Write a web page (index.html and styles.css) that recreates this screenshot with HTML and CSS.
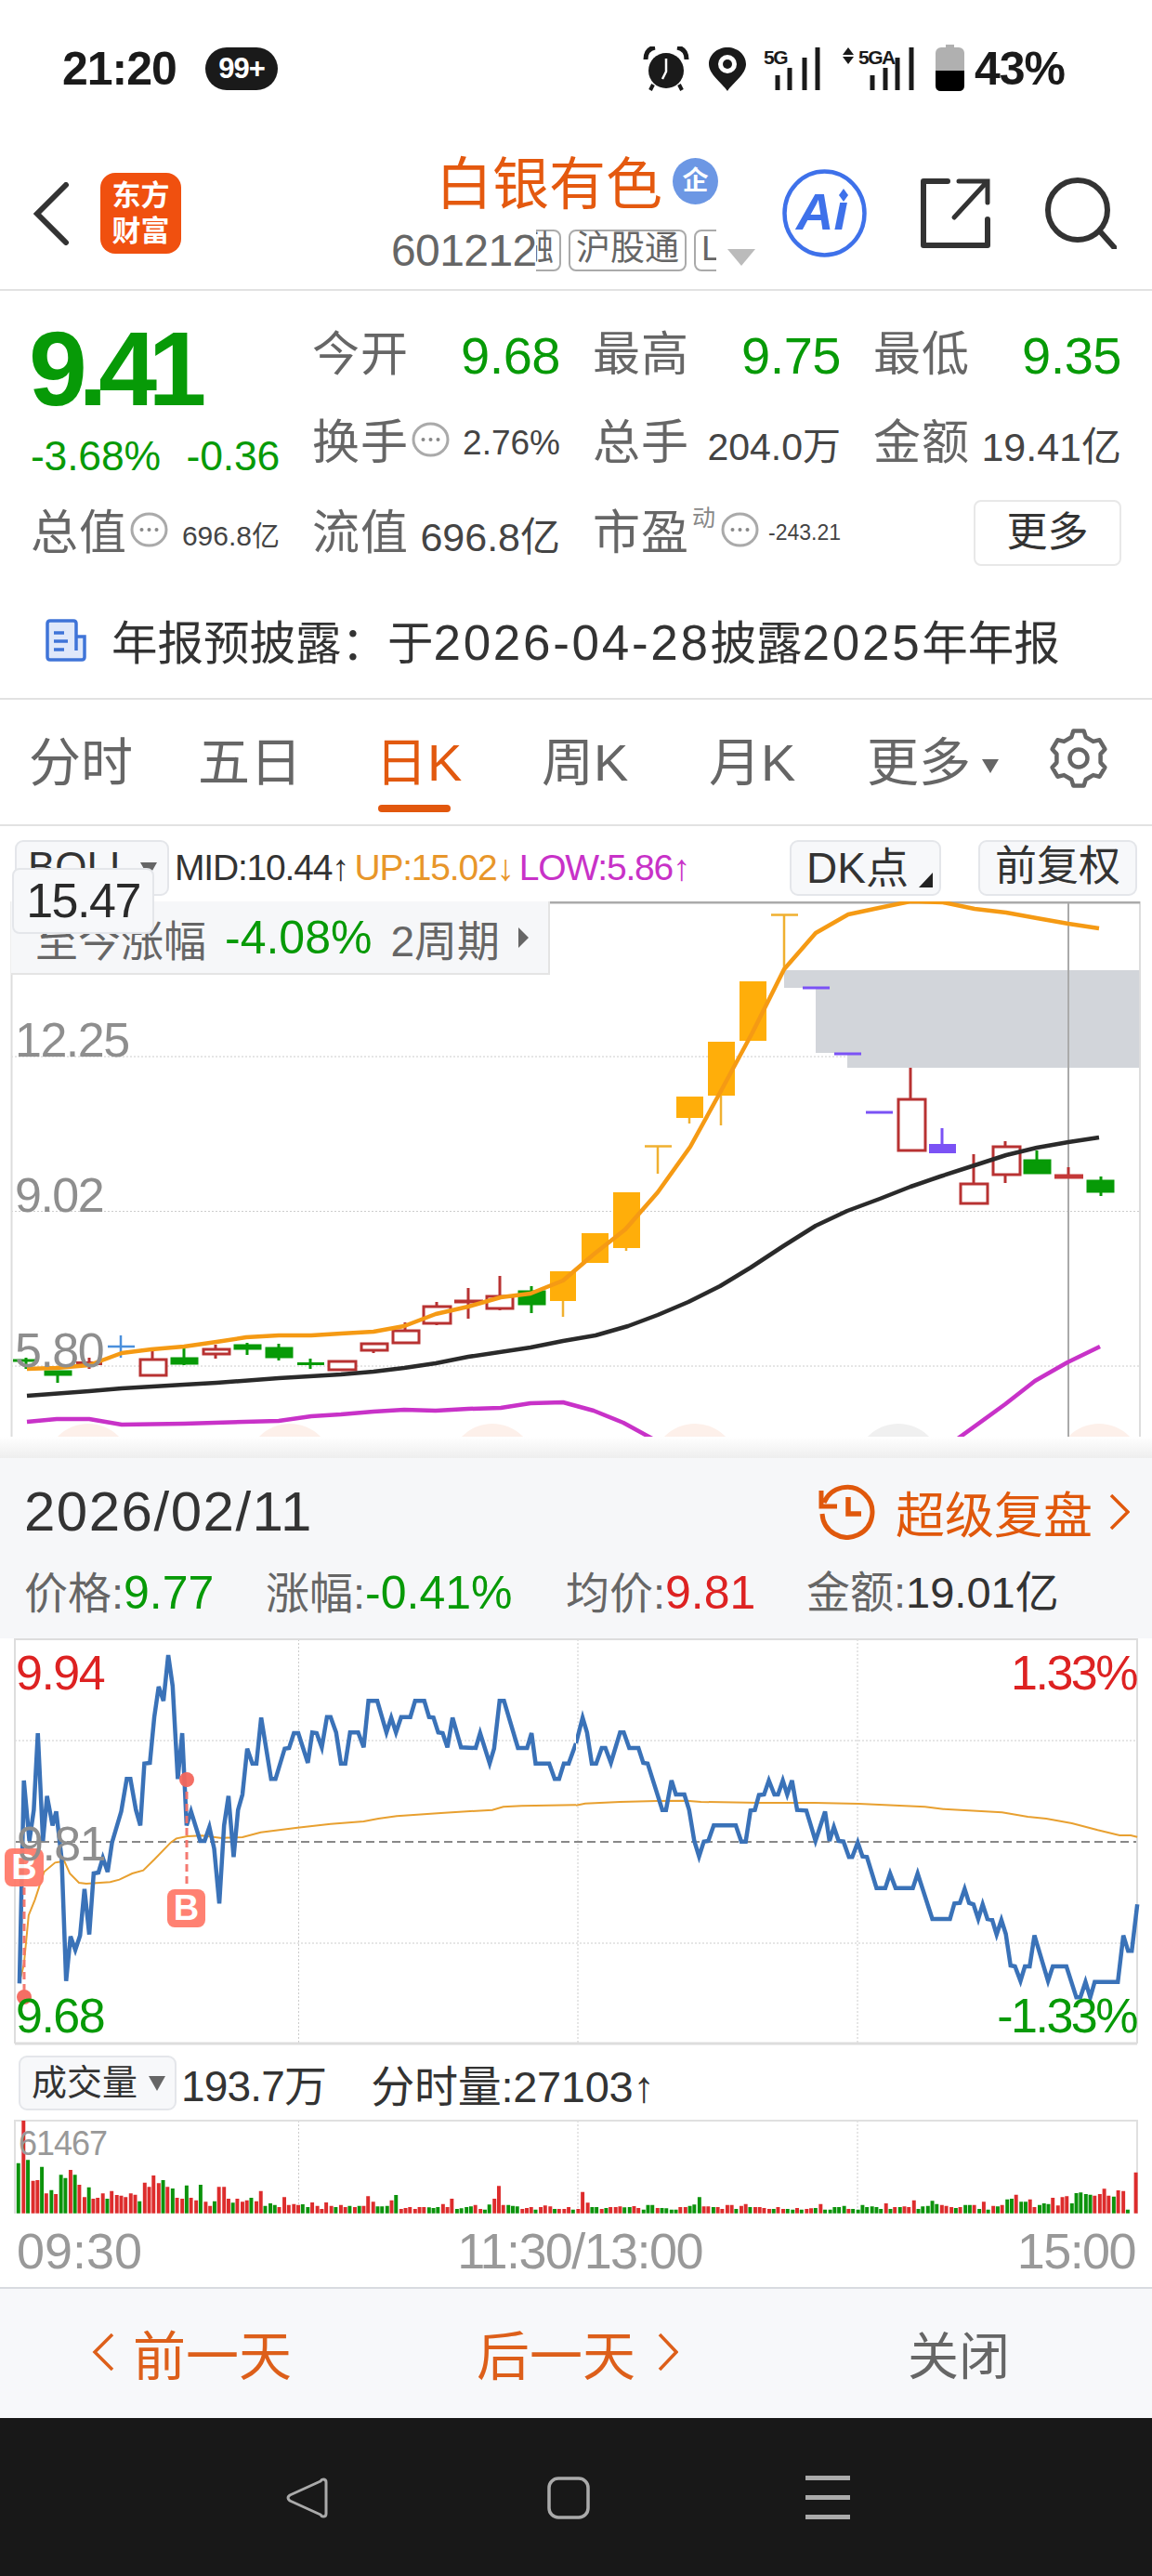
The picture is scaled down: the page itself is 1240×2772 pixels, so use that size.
FILE: index.html
```html
<!DOCTYPE html>
<html lang="zh-CN">
<head>
  <meta charset="UTF-8">
  <title>白银有色</title>
  <link rel="stylesheet" href="styles.css">
</head>
<body>
<svg class="defs" width="0" height="0">
  <symbol id="dots" viewBox="0 0 41 38">
    <ellipse cx="20.5" cy="19" rx="18.5" ry="17" fill="none" stroke="#aaa" stroke-width="3"/>
    <circle cx="12.5" cy="19" r="2" fill="#888"/><circle cx="20.5" cy="19" r="2" fill="#888"/><circle cx="28.5" cy="19" r="2" fill="#888"/>
  </symbol>
</svg>

<!-- 状态栏 -->
<div class="status">
  <span class="clock">21:20</span>
  <span class="badge">99+</span>
  <div class="status-right">
    <svg width="50" height="48" viewBox="0 0 50 48"><circle cx="25" cy="26" r="19" fill="#1a1a1a"/><path d="M3 14C3 6 7 2 13 1M47 14C47 6 43 2 37 1" fill="none" stroke="#1a1a1a" stroke-width="5"/><path d="M25 13V27L21 35" fill="none" stroke="#fff" stroke-width="2.5"/><path d="M11 41L8 47M39 41L42 47" stroke="#1a1a1a" stroke-width="4"/></svg>
    <svg class="st-pin" width="40" height="47" viewBox="0 0 40 47"><path d="M20 47C14 38 0 29 0 18C0 8 9 0 20 0S40 8 40 18C40 29 26 38 20 47Z" fill="#1a1a1a"/><circle cx="20" cy="18" r="10" fill="#fff"/><circle cx="20" cy="18" r="5" fill="#1a1a1a"/></svg>
    <svg class="st-sig" width="64" height="48" viewBox="0 0 64 48"><text class="st-net" x="0" y="19">5G</text><path d="M15 47V31M28 47V23M44 47V12M58 47V1" stroke="#1a1a1a" stroke-width="5" fill="none"/></svg>
    <svg class="st-sig2" width="80" height="48" viewBox="0 0 80 48"><path d="M6 1L12 9H0ZM6 19L12 11H0Z" fill="#1a1a1a"/><text class="st-net" x="17" y="19">5GA</text><path d="M32 47V31M46 47V23M59 47V12M74 47V1" stroke="#1a1a1a" stroke-width="5" fill="none"/></svg>
    <svg class="st-bat" width="31" height="50" viewBox="0 0 31 50"><rect x="11" y="0" width="9" height="5" fill="#b0b0b0"/><rect x="0" y="3" width="31" height="47" rx="6" fill="#b0b0b0"/><path d="M0 28H31V44Q31 50 25 50H6Q0 50 0 44Z" fill="#000"/></svg>
    <span class="percent">43%</span>
  </div>
</div>

<!-- 标题栏 -->
<div class="head">
  <svg class="back" width="39" height="68" viewBox="0 0 39 68"><path d="M35 3L4 34L35 65" fill="none" stroke="#333" stroke-width="6" stroke-linecap="round"/></svg>
  <div class="logo"><span>东方</span><span>财富</span></div>
  <div class="title">
    <div class="name-row"><span class="name">白银有色</span><span class="qi">企</span></div>
    <div class="code-row">
      <span class="code">601212</span>
      <div class="tags"><span class="tag tag-first">融</span><span class="tag">沪股通</span><span class="tag">L1</span></div>
      <span class="tri-down"></span>
    </div>
  </div>
  <svg class="ai" width="91" height="95" viewBox="0 0 91 95"><ellipse cx="45.500" cy="47.500" rx="43" ry="45" fill="#fff" stroke="#3e71ea" stroke-width="4.500"/><text class="ai-text" x="15" y="65">Aı</text><path d="M66 21L71 28L66 35L61 28Z" fill="#3e71ea"/></svg>
  <svg class="share" width="75" height="75" viewBox="0 0 75 75"><path d="M29 3H3V72H72V44" fill="none" stroke="#333" stroke-width="6" stroke-linejoin="round" stroke-linecap="round"/><path d="M36 42L71 4M41 3H72V26" fill="none" stroke="#333" stroke-width="5" stroke-linecap="round"/></svg>
  <svg class="search" width="77" height="77" viewBox="0 0 77 77"><ellipse cx="35" cy="35" rx="32" ry="32" fill="none" stroke="#333" stroke-width="6"/><path d="M59 58L75 76" stroke="#333" stroke-width="6" stroke-linecap="round"/></svg>
</div>

<!-- 行情 -->
<div class="quote">
  <div class="cur">
    <div class="cur-price">9.41</div>
    <div class="cur-change"><span>-3.68%</span><span>-0.36</span></div>
  </div>
  <div class="cell cell-top"><span class="lab">今开</span><span class="num">9.68</span></div>
  <div class="cell cell-top"><span class="lab">最高</span><span class="num">9.75</span></div>
  <div class="cell cell-top"><span class="lab">最低</span><span class="num">9.35</span></div>
  <div class="cell"><span class="lab">换手</span><svg class="dots" width="41" height="38"><use href="#dots"/></svg><span class="val val-m">2.76%</span></div>
  <div class="cell"><span class="lab">总手</span><span class="val val-w">204.0万</span></div>
  <div class="cell"><span class="lab">金额</span><span class="val val-l">19.41亿</span></div>
  <div class="cell"><span class="lab">总值</span><svg class="dots" width="41" height="38"><use href="#dots"/></svg><span class="val val-s">696.8亿</span></div>
  <div class="cell"><span class="lab">流值</span><span class="val val-l">696.8亿</span></div>
  <div class="cell"><span class="lab">市盈</span><sup class="dong">动</sup><svg class="dots" width="41" height="38"><use href="#dots"/></svg><span class="val val-xs">-243.21</span></div>
  <div class="cell"><span class="more-btn">更多</span></div>
</div>

<div class="notice">
  <svg width="44" height="46" viewBox="0 0 44 46"><path d="M33 34V5Q33 2 30 2H5Q2 2 2 5V41Q2 44 5 44H39Q42 44 42 41V19H33" fill="#dfe8fa" stroke="#3f74d8" stroke-width="3.500"/><path d="M9 15H20M9 24H24M9 33H20" stroke="#3f74d8" stroke-width="3.500"/></svg>
  <span>年报预披露：于<span class="nd">2026-04-28</span>披露<span class="nd">2025</span>年年报</span>
</div>

<!-- 周期切换 -->
<div class="tabs">
  <span class="tab">分时</span>
  <span class="tab">五日</span>
  <span class="tab active">日K</span>
  <span class="tab">周K</span>
  <span class="tab">月K</span>
  <span class="tab">更多<i class="tab-tri"></i></span>
  <svg class="gear" width="66" height="66" viewBox="0 0 66 66"><path d="M25.200 10.300L27.300 3.600H38.700L40.800 10.300L48.700 14.900L55.600 13.300L61.400 23.200L56.600 28.400V37.600L61.400 42.800L55.600 52.700L48.700 51.100L40.800 55.700L38.700 62.400H27.300L25.200 55.700L17.300 51.100L10.400 52.700L4.600 42.800L9.400 37.600V28.400L4.600 23.200L10.400 13.300L17.300 14.900Z" fill="none" stroke="#666" stroke-width="4.500" stroke-linejoin="round"/><circle cx="33" cy="33" r="9.500" fill="none" stroke="#666" stroke-width="4.500"/></svg>
</div>

<!-- K线 -->
<div class="kline">
  <div class="k-tools">
    <span class="btn btn-boll">BOLL<i class="btn-tri"></i></span>
    <span class="k-val k-mid">MID:10.44↑</span>
    <span class="k-val k-up">UP:15.02↓</span>
    <span class="k-val k-low">LOW:5.86↑</span>
    <span class="btn btn-dk">DK点<i class="corner"></i></span>
    <span class="btn btn-fq">前复权</span>
  </div>
  <svg class="k-chart" width="1240" height="576" viewBox="0 969 1240 576">
    <g class="k-marks"><circle cx="95" cy="1577" r="46" fill="#fdf0ea"/><circle cx="312" cy="1577" r="46" fill="#fdf0ea"/><circle cx="530" cy="1577" r="46" fill="#fdf0ea"/><circle cx="748" cy="1577" r="46" fill="#fdf0ea"/><circle cx="967" cy="1577" r="46" fill="#f0f0f0"/><circle cx="1183" cy="1577" r="46" fill="#fdf0ea"/></g>
    <path class="grid" d="M12 1136H1227M12 1302.500H1227M12 1469H1227"/>
    <path d="M844 1043H1227V1148H912V1132H878V1062H844Z" fill="#d2d5da"/>
    <path d="M1150 969V1545" stroke="#aaa" stroke-width="2"/>
    <path d="M12.500 969V1545M1227 969V1545" stroke="#ddd" stroke-width="2"/>
    <path d="M12 970H1227" stroke="#aaa" stroke-width="3"/>

    <!-- 绿 -->
    <g fill="#079a07" stroke="#079a07" stroke-width="3">
      <path d="M14 1463H41M28 1460V1472M62 1479V1487M198 1450V1468M266 1444V1457M300 1445V1463M334 1461V1472M320 1466.500H349M572 1383V1412M1116 1237V1262M1185 1265V1286" fill="none"/>
      <rect x="49" y="1475" width="27" height="3"/><rect x="185" y="1461" width="27" height="5"/><rect x="253" y="1447" width="27" height="3"/><rect x="287" y="1450" width="27" height="9"/><rect x="559" y="1389" width="27" height="13"/><rect x="1103" y="1248" width="27" height="13"/><rect x="1171" y="1270" width="27" height="11"/>
    </g>
    <!-- 蓝十字 -->
    <path d="M116 1448H145M130 1436V1460" stroke="#4a8fdc" stroke-width="2.500" fill="none"/>
    <!-- 红 -->
    <g fill="#fff" stroke="#b83232" stroke-width="3">
      <path d="M96 1460V1472M164 1453V1461M232 1446V1450M232 1455V1461M402 1452V1455M436 1422V1430M470 1400V1404M470 1423V1425M504 1385V1418M538 1372V1393M538 1407V1409M980 1148V1181M1048 1241V1272M1082 1227V1232M1082 1263V1272M1150 1255V1265" fill="none"/>
      <path d="M82 1466H110" stroke-width="4"/><path d="M489 1399.500H520" stroke-width="4"/><path d="M1135 1265H1166" stroke-width="5" stroke="#c43838"/>
      <rect x="151" y="1462" width="28" height="17"/><rect x="219" y="1451" width="28" height="5"/><rect x="354" y="1464" width="29" height="9"/><rect x="389" y="1445" width="28" height="7"/><rect x="423" y="1431" width="28" height="13"/><rect x="456" y="1405" width="29" height="18"/><rect x="524" y="1394" width="28" height="13"/><rect x="967" y="1182" width="29" height="55"/><rect x="1034" y="1273" width="29" height="21"/><rect x="1069" y="1233" width="29" height="30"/>
    </g>
    <!-- 橙 -->
    <g fill="#ffae0a" stroke="none">
      <rect x="592" y="1367" width="28" height="32"/><rect x="626" y="1326" width="29" height="32"/><rect x="660" y="1282" width="29" height="60"/><rect x="728" y="1179" width="29" height="23"/><rect x="762" y="1120" width="29" height="58"/><rect x="796" y="1055" width="29" height="64"/>
    </g>
    <path d="M606 1399V1416M674 1342V1345M694 1232.500H723M708 1232V1262M742 1202V1208M776 1178V1210M830 983.500H859M844 983V1043" stroke="#f0b030" stroke-width="2.500" fill="none"/>
    <!-- 紫 -->
    <path d="M864 1062H893M898 1133H927M932 1196H961" stroke="#7b52f5" stroke-width="3" fill="none"/>
    <path d="M1014 1213V1230" stroke="#7b52f5" stroke-width="3"/><rect x="1000" y="1230" width="29" height="10" fill="#7b52f5"/>

    <polyline class="ln ln-low" points="29,1529 61,1526 96,1526 131,1532 198,1531 300,1528 335,1523 367,1521 402,1518 435,1516 469,1517 504,1515 539,1514 571,1509 606,1508 639,1517 671,1530 702,1547"/>
    <polyline class="ln ln-low" points="1031,1547 1082,1510 1114,1485 1149,1465 1184,1448"/>
    <polyline class="ln ln-mid" points="29,1501 96,1496 131,1493 198,1489 233,1487 300,1482 367,1478 402,1475 435,1471 469,1466 504,1459 571,1449 606,1442 641,1436 676,1426 708,1414 741,1400 775,1383 808,1363 843,1340 878,1318 912,1302 947,1289 980,1276 1012,1265 1049,1253 1083,1242 1116,1234 1150,1228 1183,1223"/>
    <polyline class="ln ln-up" points="29,1472 61,1471 96,1468 131,1455 163,1451 198,1448 233,1443 265,1438 300,1436 335,1436 367,1434 402,1432 435,1426 469,1413 504,1405 539,1395 571,1391 606,1377 640,1348 673,1322 708,1282 743,1233 776,1173 810,1110 844,1042 878,1003 913,983 946,976 980,969 1015,970 1049,977 1083,981 1116,987 1150,993 1183,998"/>

    <text class="axis" x="16" y="1136">12.25</text>
    <text class="axis" x="16" y="1303">9.02</text>
    <text class="axis" x="16" y="1470">5.80</text>
  </svg>
  <div class="range"><span class="range-lab">至今涨幅</span><span class="range-val">-4.08%</span><span class="range-lab">2周期</span><i class="range-tri"></i></div>
  <div class="pop-price">15.47</div>
</div>
<div class="shade"></div>

<!-- 复盘面板 -->
<div class="panel">
  <div class="panel-top">
    <span class="p-date">2026/02/11</span>
    <span class="p-link">
      <svg width="63" height="61" viewBox="0 0 63 61"><path d="M3 8V25H20M6 21A27 27 0 1 1 4 33" fill="none" stroke="#e0580c" stroke-width="5"/><path d="M32 15V33H46" fill="none" stroke="#e0580c" stroke-width="5.500"/></svg>
      <span>超级复盘</span>
      <svg class="p-chev" width="22" height="38" viewBox="0 0 22 38"><path d="M2 1L20 19L2 37" fill="none" stroke="#e0580c" stroke-width="3.500"/></svg>
    </span>
  </div>
  <div class="panel-row">
    <span class="p-lab">价格:<b class="green">9.77</b></span>
    <span class="p-lab">涨幅:<b class="green">-0.41%</b></span>
    <span class="p-lab">均价:<b class="red">9.81</b></span>
    <span class="p-lab">金额:<b class="dark">19.01亿</b></span>
  </div>
</div>

<!-- 分时图 -->
<svg class="t-chart" width="1240" height="438" viewBox="0 1762 1240 438">
  <path class="grid" d="M16 1872H1224M16 2090H1224M321.500 1763V2197M622 1763V2197M923 1763V2197"/>
  <path d="M16 1981H1224" stroke="#888" stroke-width="2" stroke-dasharray="9 5" fill="none"/>
  <path d="M16 2198V1763H1224V2198" fill="none" stroke="#ddd" stroke-width="2"/>
  <path d="M16 2198H1224" stroke="#ddd" stroke-width="3"/>
  <svg x="0" y="1760" width="620" height="450" viewBox="0 0 1568 1350" preserveAspectRatio="none">
    <polyline class="t-avg" points="53,1115 65,1060 78,900 95,850 120,760 150,730 175,725 190,765 215,795 235,798 300,793 325,785 360,765 390,755 420,720 465,665 480,652 510,645 550,643 600,650 660,648 710,632 760,625 810,617 900,605 990,597 1030,588 1080,580 1200,570 1340,560 1370,550 1420,547 1568,544"/>
    <polyline class="t-price" points="53,1120 65,465 80,660 92,560 103,312 117,660 128,515 143,610 153,565 168,720 180,1112 192,968 205,1012 218,965 230,815 243,962 255,765 268,762 280,715 293,760 305,665 330,565 345,460 355,460 370,560 382,610 393,410 408,408 420,260 432,162 445,208 458,60 470,160 484,460 496,312 508,610 520,565 545,660 557,660 570,615 583,685 597,862 610,610 622,515 636,712 648,560 660,510 673,362 687,410 698,410 711,262 738,460 750,460 775,362 787,360 800,312 812,312 838,408 850,310 862,312 876,358 890,260 900,260 915,310 928,410 940,410 953,310 975,310 990,358 1003,208 1027,208 1052,310 1065,262 1078,310 1092,260 1117,260 1130,208 1155,208 1168,260 1180,262 1193,310 1205,312 1218,358 1232,262 1255,358 1295,360 1307,312 1333,410 1345,362 1360,208 1372,208 1410,360 1435,360 1447,312 1458,410 1495,410 1510,460 1522,460 1535,410 1548,410 1568,345"/>
  </svg>
  <svg x="620" y="1760" width="620" height="450" viewBox="0 0 1568 1350" preserveAspectRatio="none">
    <polyline class="t-avg" points="0,545 25,539 120,534 220,531 300,530 340,534 500,537 650,537 770,540 950,550 1000,557 1160,568 1230,582 1280,588 1350,603 1420,625 1480,642 1510,642 1528,647"/>
    <polyline class="t-price" points="0,345 18,262 30,310 43,410 55,410 70,360 80,360 95,408 120,310 130,310 145,360 170,360 183,408 195,410 235,560 245,560 260,465 272,510 295,510 308,560 322,660 335,710 348,662 360,660 375,610 435,610 450,662 462,662 475,562 487,560 498,512 512,510 525,465 540,510 550,510 563,465 575,510 588,465 602,560 627,562 652,660 678,565 690,660 702,615 715,660 728,662 743,712 752,712 767,665 780,710 792,712 818,812 842,812 855,765 870,812 917,812 930,765 970,912 1018,912 1030,862 1045,860 1058,815 1070,860 1082,865 1095,912 1107,865 1120,912 1133,915 1145,962 1158,915 1170,960 1183,1062 1195,1065 1210,1112 1222,1065 1235,1065 1248,965 1285,1112 1298,1065 1335,1065 1362,1165 1373,1165 1387,1115 1400,1165 1412,1115 1475,1115 1490,965 1503,1015 1513,1015 1528,865"/>
  </svg>
  <!-- 买点 -->
  <g opacity=".95">
    <path d="M201 1914V2030" stroke="#f4736a" stroke-width="3" stroke-dasharray="8 5" fill="none"/>
    <circle cx="201" cy="1914" r="8" fill="#f4675c"/>
    <rect x="180" y="2032" width="41" height="41" rx="8" fill="#ff7b6b"/>
    <text class="b-mark" x="200.500" y="2065">B</text>
    <path d="M26 2030V2148" stroke="#f4736a" stroke-width="3" stroke-dasharray="8 5" fill="none"/>
    <circle cx="26" cy="2148" r="8" fill="#f4675c"/>
    <rect x="5" y="1988" width="42" height="41" rx="8" fill="#ff7b6b"/>
    <text class="b-mark" x="26" y="2021">B</text>
  </g>
  <text class="axis red-t" x="17" y="1817">9.94</text>
  <text class="axis" x="18" y="2001">9.81</text>
  <text class="axis green-t" x="17" y="2186">9.68</text>
  <text class="axis tight red-t end" x="1223" y="1817">1.33%</text>
  <text class="axis tight green-t end" x="1223" y="2186">-1.33%</text>
</svg>

<!-- 成交量 -->
<div class="vol-tools">
  <span class="btn btn-vol">成交量<i class="btn-tri"></i></span>
  <span class="vol-text">193.7万</span>
  <span class="vol-text vol-cur">分时量:27103↑</span>
</div>
<svg class="v-chart" width="1240" height="102" viewBox="0 2280 1240 102">
  <path class="grid" d="M321.500 2281V2381M622 2281V2381M923 2281V2381"/>
  <path d="M16 2381V2281H1224V2381" fill="none" stroke="#e0e0e0" stroke-width="2"/>
  <svg x="0" y="2280" width="1240" height="101" viewBox="0 270 1568 303" preserveAspectRatio="none">
    <path d="M32 572V273M45 572V467M51 572V465M63 572V508M76 572V510M96 572V432M108 572V480M115 572V520M127 572V525M133 572V522M140 572V508M152 572V500M159 572V513M165 572V515M171 572V520M178 572V508M184 572V512M197 572V473M203 572V487M209 572V450M216 572V475M228 572V487M241 572V522M248 572V525M260 572V522M267 572V530M280 572V535M286 572V548M298 572V487M305 572V487M311 572V525M323 572V525M330 572V535M336 572V530M349 572V533M355 572V500M380 572V552M387 572V520M393 572V545M400 572V542M406 572V545M425 572V537M432 572V548M438 572V558M444 572V537M451 572V548M464 572V545M470 572V552M483 572V552M495 572V548M501 572V517M508 572V535M533 572V530M546 572V558M552 572V555M558 572V552M565 572V558M571 572V552M577 572V552M603 572V542M609 572V552M615 572V525M647 572V545M654 572V558M673 572V525M679 572V484M685 572V545M711 572V558M717 572V555M723 572V552M736 572V552M742 572V547M749 572V550M761 572V558M768 572V558M774 572V552M787 572V558M793 572V503M800 572V538M819 572V558M831 572V552M838 572V552M844 572V550M863 572V549M869 572V555M895 572V555M926 572V552M933 572V552M958 572V550M964 572V550M977 572V552M983 572V558M990 572V545M996 572V545M1009 572V548M1015 572V542M1028 572V552M1034 572V552M1040 572V555M1047 572V558M1059 572V552M1066 572V558M1085 572V555M1098 572V558M1104 572V556M1117 572V542M1155 572V558M1206 572V540M1218 572V552M1231 572V550M1237 572V552M1244 572V530M1282 572V545M1288 572V548M1295 572V552M1307 572V552M1326 572V545M1339 572V535M1352 572V548M1364 572V545M1383 572V512M1402 572V527M1408 572V552M1433 572V522M1440 572V547M1446 572V520M1452 572V517M1490 572V515M1497 572V510M1503 572V493M1509 572V515M1522 572V498M1529 572V500M1546 572V440" class="bar bar-red"/>
    <path d="M25 572V410M38 572V400M57 572V422M70 572V497M83 572V448M89 572V458M102 572V448M121 572V488M146 572V525M190 572V533M222 572V465M235 572V492M254 572V482M273 572V480M292 572V533M317 572V538M342 572V522M361 572V548M368 572V540M374 572V545M412 572V543M419 572V552M457 572V552M476 572V548M489 572V548M514 572V550M520 572V550M527 572V548M539 572V513M584 572V553M590 572V555M596 572V552M622 572V558M628 572V556M635 572V552M641 572V550M660 572V560M666 572V544M692 572V545M698 572V548M704 572V550M729 572V560M755 572V558M780 572V560M806 572V552M812 572V552M825 572V555M850 572V553M857 572V552M876 572V560M882 572V545M888 572V545M901 572V555M907 572V556M914 572V560M920 572V560M939 572V548M945 572V544M952 572V520M971 572V552M1002 572V558M1021 572V552M1053 572V558M1072 572V558M1079 572V560M1091 572V560M1110 572V555M1123 572V560M1130 572V560M1136 572V552M1142 572V552M1149 572V548M1161 572V558M1168 572V560M1174 572V545M1180 572V552M1187 572V550M1193 572V552M1199 572V558M1212 572V558M1225 572V552M1250 572V558M1256 572V550M1263 572V548M1269 572V532M1275 572V542M1301 572V555M1314 572V545M1320 572V545M1333 572V558M1345 572V560M1358 572V550M1371 572V527M1377 572V525M1390 572V535M1396 572V535M1415 572V545M1421 572V540M1427 572V542M1459 572V540M1465 572V507M1471 572V505M1478 572V510M1484 572V512M1516 572V518M1535 572V560" class="bar bar-green"/>
  </svg>
  <text class="v-max" x="20" y="2318">61467</text>
</svg>
<div class="times"><span>09:30</span><span>11:30/13:00</span><span>15:00</span></div>

<!-- 底部操作 -->
<div class="day-bar">
  <svg width="24" height="40" viewBox="0 0 24 40"><path d="M22 1L3 20L22 39" fill="none" stroke="#dd5f1a" stroke-width="3.500"/></svg>
  <span class="day-link day-prev">前一天</span>
  <span class="day-link day-next">后一天</span>
  <svg class="day-chev" width="22" height="40" viewBox="0 0 22 40"><path d="M2 1L20 20L2 39" fill="none" stroke="#dd5f1a" stroke-width="3.500"/></svg>
  <span class="day-close">关闭</span>
</div>

<!-- 系统导航 -->
<div class="nav">
  <svg width="45" height="46" viewBox="0 0 45 46"><path d="M40 3Q43 3 43 6V40Q43 43 40 43Q38 43 37 41L4 26Q0 23 4 20L37 5Q38 3 40 3Z" fill="none" stroke="#aaa" stroke-width="3" stroke-linejoin="round"/></svg>
  <svg class="nav-home" width="46" height="46" viewBox="0 0 46 46"><rect x="2" y="2" width="42" height="42" rx="10" fill="none" stroke="#aaa" stroke-width="3.500"/></svg>
  <svg class="nav-menu" width="48" height="47" viewBox="0 0 48 47"><path d="M0 2.500H48M0 23.500H48M0 44.500H48" stroke="#aaa" stroke-width="5"/></svg>
</div>
</body>
</html>
```

FILE: styles.css
```css
* {
  padding: 0;
  margin: 0;
  box-sizing: border-box;
}

body {
  width: 1240px;
  height: 2772px;
  overflow: hidden;
  background: #fff;
  font-family: "Liberation Sans", "Noto Sans CJK SC", sans-serif;
  color: #333;
}

i {
  font-style: normal;
}

svg {
  display: block;
  flex: none;
}

.defs {
  position: absolute;
}

/* 状态栏 */
.status {
  height: 148px;
  padding: 0 0 0 67px;
  display: flex;
  align-items: center;
}

.clock {
  width: 129px;
  font-size: 50px;
  font-weight: bold;
  letter-spacing: -1px;
  color: #1a1a1a;
}

.badge {
  width: 78px;
  height: 46px;
  margin-left: 25px;
  border-radius: 23px;
  background: #1a1a1a;
  color: #fff;
  font-size: 31px;
  font-weight: bold;
  line-height: 46px;
  text-align: center;
  letter-spacing: -1px;
}

.status-right {
  margin-left: 393px;
  display: flex;
  align-items: center;
}

.st-pin {
  margin-left: 21px;
}

.st-sig {
  margin-left: 19px;
}

.st-sig2 {
  margin-left: 21px;
}

.st-bat {
  margin-left: 20px;
  margin-top: -3px;
}

.st-net {
  font-size: 21px;
  font-weight: bold;
  letter-spacing: -1.5px;
  fill: #1a1a1a;
}

.percent {
  margin-left: 11px;
  font-size: 50px;
  font-weight: bold;
  letter-spacing: -1px;
  color: #1a1a1a;
}

/* 标题栏 */
.head {
  height: 165px;
  padding-left: 36px;
  display: flex;
  align-items: center;
  border-bottom: 2px solid #e2e2e2;
}

.back {
  margin-right: 33px;
}

.logo {
  width: 87px;
  height: 87px;
  border-radius: 16px;
  background: #f0500f;
  color: #fff;
  font-size: 31px;
  font-weight: bold;
  line-height: 38px;
  display: flex;
  flex-direction: column;
  align-items: center;
  justify-content: center;
}

.title {
  width: 393px;
  margin-left: 226px;
}

.name-row {
  padding-left: 48px;
  display: flex;
  align-items: center;
  height: 76px;
  margin-top: -6px;
}

.name {
  font-size: 61px;
  line-height: 76px;
  color: #e4590f;
}

.qi {
  width: 49px;
  height: 50px;
  margin-left: 11px;
  margin-top: -8px;
  border-radius: 50%;
  background: #6c97e4;
  color: #fff;
  font-size: 28px;
  font-weight: bold;
  line-height: 50px;
  text-align: center;
}

.code-row {
  margin-top: 10px;
  display: flex;
  align-items: center;
  height: 46px;
}

.code {
  width: 156px;
  font-size: 48px;
  letter-spacing: -.6px;
  color: #666;
}

.tags {
  width: 194px;
  display: flex;
  overflow: hidden;
}

.tag {
  flex: none;
  height: 45px;
  padding: 0 6px;
  margin-right: 8px;
  border: 2px solid #aaa;
  border-radius: 8px;
  font-size: 37px;
  line-height: 38px;
  color: #666;
}

.tag-first {
  margin-left: -26px;
}

.tri-down {
  width: 0;
  height: 0;
  margin: 14px 0 0 12px;
  border-left: 15px solid transparent;
  border-right: 15px solid transparent;
  border-top: 18px solid #bbb;
}

.ai {
  margin-left: 28px;
}

.ai-text {
  font-size: 56px;
  font-weight: bold;
  font-style: italic;
  fill: #3e71ea;
}

.share {
  margin-left: 58px;
}

.search {
  margin-left: 59px;
}

/* 行情 */
.quote {
  padding-left: 33px;
  padding-top: 18px;
  display: grid;
  grid-template-columns: 268px 267px 267px 267px;
  grid-template-rows: 97px 97px 97px;
  column-gap: 35px;
}

.cur {
  grid-row: span 2;
  color: #079a07;
}

.cur-price {
  margin-top: 6px;
  margin-left: -2px;
  font-size: 113px;
  font-weight: bold;
  line-height: 120px;
  letter-spacing: -9.500px;
}

.cur-change {
  margin-top: 9px;
  display: flex;
  justify-content: space-between;
  font-size: 44.500px;
  line-height: 50px;
  letter-spacing: -.2px;
}

.cell {
  display: flex;
  align-items: center;
}

.cell-top {
  padding-top: 5px;
}

.lab {
  font-size: 51px;
  color: #666;
  letter-spacing: 1px;
  line-height: 60px;
}

.num {
  margin-left: auto;
  font-size: 56px;
  letter-spacing: -.5px;
  color: #079a07;
}

.val {
  margin-left: auto;
  color: #444;
  white-space: nowrap;
}

.val-l {
  font-size: 43px;
}

.val-m {
  font-size: 37px;
}

.val-w {
  font-size: 41px;
}

.val-s {
  font-size: 30px;
}

.val-xs {
  font-size: 23px;
}

.dots {
  margin: -8px 0 0 3px;
}

.dong {
  width: 28px;
  margin: -34px 0 0 3px;
  font-size: 25px;
  line-height: 28px;
  color: #888;
}

.more-btn {
  width: 159px;
  height: 71px;
  margin-left: auto;
  border: 2px solid #e8e8e8;
  border-radius: 8px;
  font-size: 44px;
  line-height: 66px;
  text-align: center;
  color: #333;
}

.notice {
  height: 131px;
  padding: 4px 0 0 49px;
  display: flex;
  align-items: center;
  border-bottom: 2px solid #e2e2e2;
  font-size: 49.500px;
  color: #333;
}

.notice svg {
  margin-right: 27px;
}

.nd {
  font-size: 53px;
  letter-spacing: 2.700px;
}

/* 周期切换 */
.tabs {
  height: 136px;
  padding-left: 31px;
  display: grid;
  grid-template-columns: 182px 194px 176px 180px 170px 195px auto;
  align-items: center;
  border-bottom: 2px solid #e2e2e2;
}

.tab {
  position: relative;
  margin-top: -10px;
  font-size: 56px;
  color: #666;
  white-space: nowrap;
}

.tab.active {
  margin-left: -3px;
  color: #e2590f;
}

.tab.active::after {
  content: "";
  position: absolute;
  left: 3px;
  bottom: -18px;
  width: 78px;
  height: 8px;
  border-radius: 4px;
  background: #e2570d;
}

.tab-tri {
  display: inline-block;
  margin-left: 12px;
  vertical-align: middle;
  border-left: 9px solid transparent;
  border-right: 9px solid transparent;
  border-top: 15px solid #666;
}

.gear {
  margin-top: -8px;
}

/* K线 */
.kline {
  position: relative;
}

.k-tools {
  height: 81px;
  padding: 9px 16px 0;
  display: flex;
  align-items: center;
}

.btn {
  position: relative;
  height: 60px;
  background: #f7f8fa;
  border: 2px solid #e4e6ea;
  border-radius: 9px;
  color: #333;
  white-space: nowrap;
}

.btn-boll {
  width: 166px;
  padding-left: 12px;
  font-size: 44px;
  line-height: 54px;
}

.btn-tri {
  position: absolute;
  top: 22px;
  right: 11px;
  border-left: 9px solid transparent;
  border-right: 9px solid transparent;
  border-top: 16px solid #666;
}

.k-val {
  font-size: 39px;
  letter-spacing: -1.200px;
  white-space: nowrap;
}

.k-mid {
  margin-left: 6px;
  color: #333;
}

.k-up {
  margin-left: 6px;
  color: #e8962a;
}

.k-low {
  margin-left: 6px;
  color: #c832c8;
}

.btn-dk {
  width: 163px;
  margin-left: auto;
  padding-left: 16px;
  font-size: 46px;
  line-height: 56px;
}

.corner {
  position: absolute;
  right: 7px;
  bottom: 7px;
  border-left: 15px solid transparent;
  border-bottom: 16px solid #222;
}

.btn-fq {
  width: 171px;
  margin-left: 40px;
  font-size: 45px;
  line-height: 54px;
  text-align: center;
}

.grid {
  fill: none;
  stroke: #ccc;
  stroke-width: 1;
  stroke-dasharray: 2 2;
}

.ln {
  fill: none;
  stroke-linejoin: round;
}

.ln-up {
  stroke: #f59a14;
  stroke-width: 4.500;
}

.ln-mid {
  stroke: #2a2a2a;
  stroke-width: 4.500;
}

.ln-low {
  stroke: #c832c8;
  stroke-width: 4.500;
}

.axis {
  font-size: 52px;
  fill: #8e8e8e;
  letter-spacing: -1.500px;
}

.tight {
  letter-spacing: -2.500px;
}

.range {
  position: absolute;
  left: 12px;
  top: 81px;
  width: 580px;
  height: 79px;
  padding: 0 0 0 26px;
  display: flex;
  align-items: center;
  background: #f6f7f9;
  border-right: 2px solid #e4e4e4;
  border-bottom: 2px solid #e4e4e4;
  font-size: 46px;
  white-space: nowrap;
}

.range-lab {
  color: #666;
}

.range-val {
  margin: 0 20px;
  font-size: 50px;
  color: #079a07;
}

.range-tri {
  margin-left: 20px;
  border-top: 11px solid transparent;
  border-bottom: 11px solid transparent;
  border-left: 11px solid #666;
}

.pop-price {
  position: absolute;
  left: 13px;
  top: 45px;
  width: 153px;
  height: 71px;
  background: #f7f8fa;
  border: 2px solid #e4e6ea;
  border-radius: 8px;
  font-size: 52px;
  line-height: 66px;
  text-align: center;
  letter-spacing: -1.500px;
  color: #2a2a2a;
}

.shade {
  height: 23px;
  background: linear-gradient(#fff, #eeeeee);
}

/* 复盘面板 */
.panel {
  height: 194px;
  padding: 0 24px 0 26px;
  background: #f6f7f9;
}

.panel-top {
  height: 115px;
  display: flex;
  align-items: center;
  justify-content: space-between;
}

.p-date {
  font-size: 60px;
  letter-spacing: 1.500px;
  color: #333;
}

.p-link {
  display: flex;
  align-items: center;
  font-size: 53px;
  color: #e0580c;
}

.p-link svg {
  margin-right: 20px;
}

.p-link .p-chev {
  margin: 0 0 0 18px;
}

.panel-row {
  display: grid;
  grid-template-columns: 260px 323px 259px auto;
  font-size: 47px;
  line-height: 60px;
}

.p-lab {
  color: #666;
  white-space: nowrap;
}

.p-lab b {
  font-weight: normal;
  font-size: 50px;
}

.p-lab .dark {
  font-size: 47px;
}

.green {
  color: #079a07;
}

.red {
  color: #dd2222;
}

.dark {
  color: #333;
}

/* 分时图 */
.t-price {
  fill: none;
  stroke: #3a72b8;
  stroke-width: 4.500;
  vector-effect: non-scaling-stroke;
}

.t-avg {
  fill: none;
  stroke: #e8a030;
  stroke-width: 2;
  vector-effect: non-scaling-stroke;
}

.red-t {
  fill: #dd2222;
}

.green-t {
  fill: #079a07;
}

.end {
  text-anchor: end;
}

.b-mark {
  font-size: 38px;
  font-weight: bold;
  text-anchor: middle;
  fill: #fff;
}

/* 成交量 */
.vol-tools {
  height: 80px;
  padding: 0 0 0 20px;
  display: flex;
  align-items: center;
}

.btn-vol {
  width: 170px;
  height: 59px;
  padding-left: 12px;
  font-size: 38px;
  line-height: 54px;
  color: #333;
}

.btn-vol .btn-tri {
  top: 20px;
  right: 10px;
}

.vol-text {
  margin-left: 5px;
  font-size: 46px;
  letter-spacing: -.8px;
  color: #333;
  white-space: nowrap;
}

.vol-cur {
  margin-left: 48px;
  font-size: 47px;
  letter-spacing: -.3px;
}

.bar {
  fill: none;
  stroke-width: 5;
}

.bar-red {
  stroke: #dd2c2c;
}

.bar-green {
  stroke: #0c930c;
}

.v-max {
  font-size: 36px;
  fill: #999;
  letter-spacing: -1px;
}

.times {
  height: 78px;
  padding: 0 18px;
  display: flex;
  justify-content: space-between;
  align-items: center;
  font-size: 54px;
  letter-spacing: -1.600px;
  color: #999;
}

.times span:first-child {
  letter-spacing: 0;
}

/* 底部操作 */
.day-bar {
  height: 141px;
  padding: 0 0 4px 99px;
  display: flex;
  align-items: center;
  background: #f7f8fa;
  border-top: 2px solid #d8dbe0;
}

.day-link {
  font-size: 57px;
  color: #dd5f1a;
}

.day-prev {
  margin-left: 20px;
}

.day-next {
  margin-left: 199px;
}

.day-chev {
  margin-left: 24px;
}

.day-close {
  margin-left: 247px;
  font-size: 55px;
  color: #666;
}

/* 系统导航 */
.nav {
  height: 171px;
  padding-left: 308px;
  display: flex;
  align-items: center;
  background: #181818;
}

.nav-home {
  margin-left: 236px;
}

.nav-menu {
  margin-left: 232px;
}
```
